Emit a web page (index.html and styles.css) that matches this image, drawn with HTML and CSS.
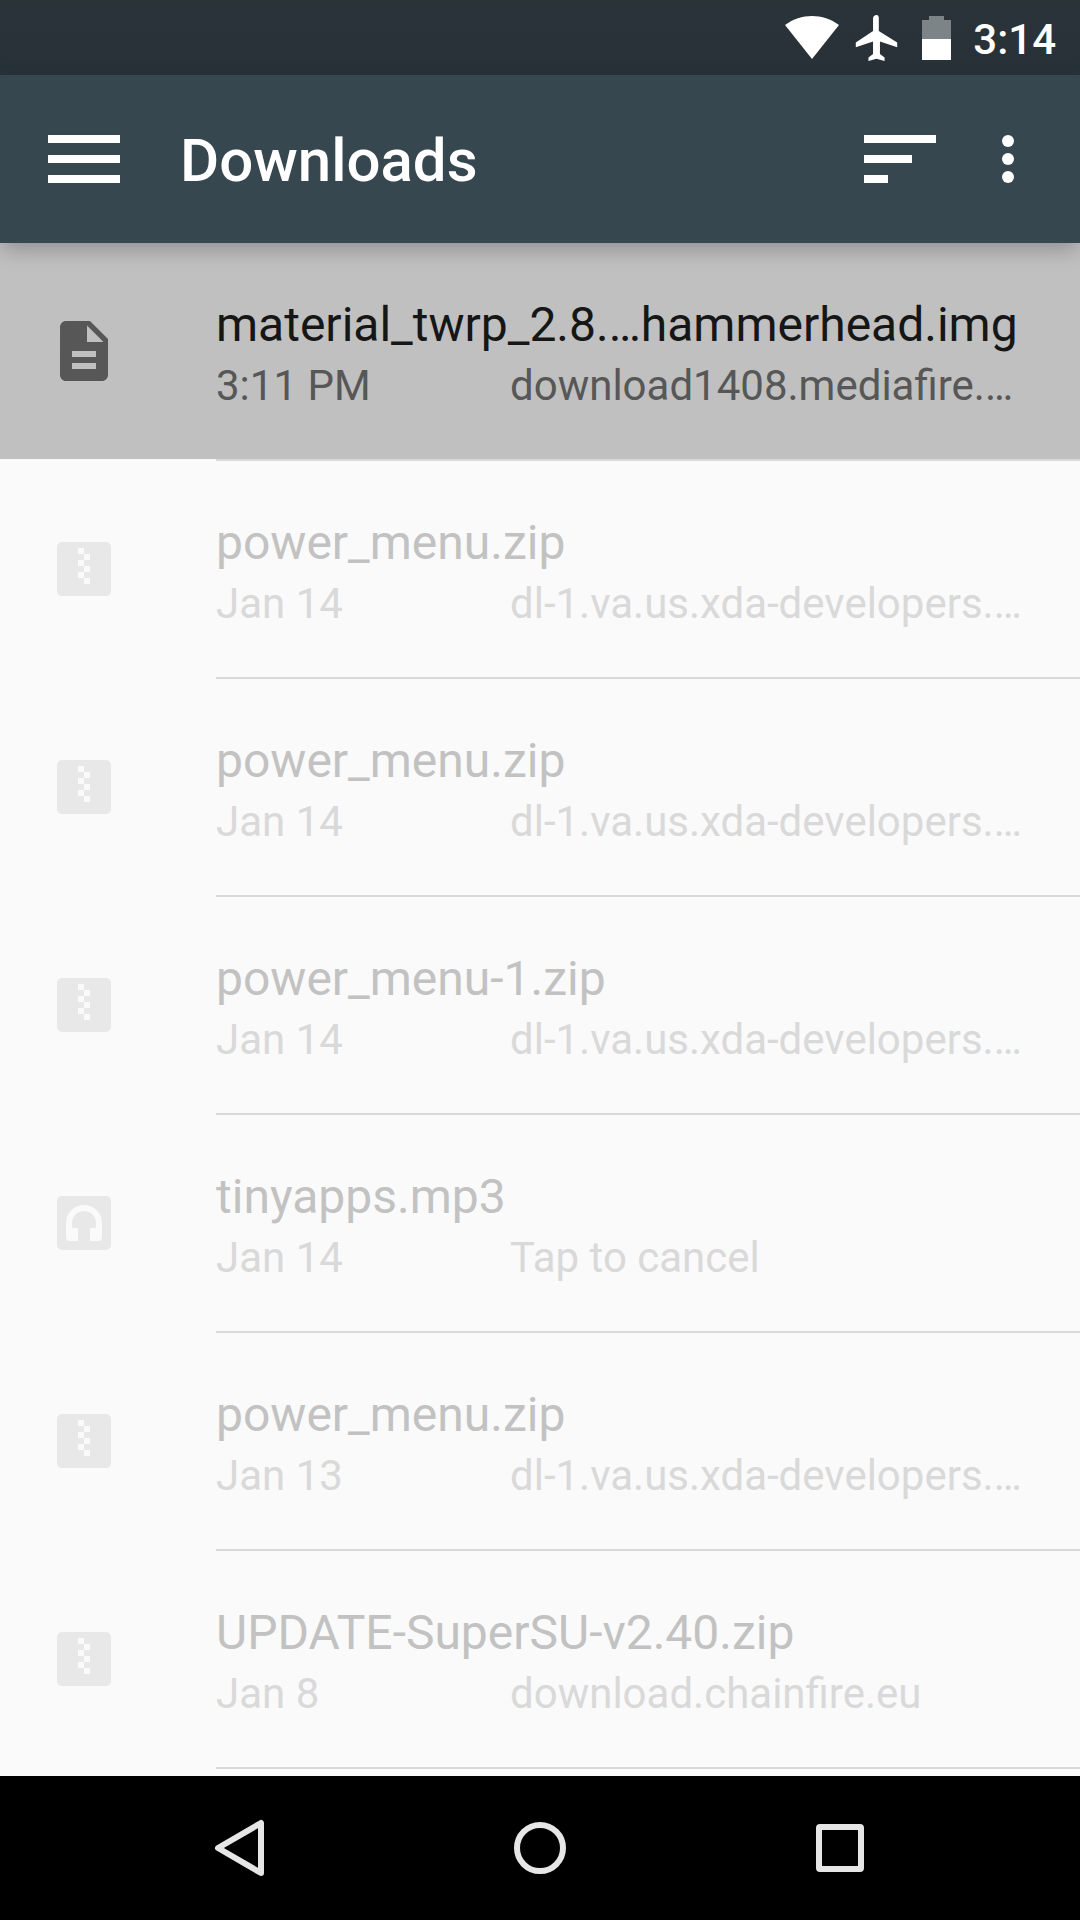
FILE: index.html
```html
<!DOCTYPE html>
<html lang="en">
<head>
<meta charset="utf-8">
<meta name="viewport" content="width=device-width, initial-scale=1">
<title>Downloads</title>
<link rel="stylesheet" href="styles.css">
</head>
<body>
<svg class="sprite" aria-hidden="true">
  <symbol id="doc" viewBox="0 0 24 24"><path d="M14 2H6C4.900 2 4.010 2.900 4.010 4L4 20c0 1.100.890 2 1.990 2H18c1.100 0 2-.900 2-2V8l-6-6zm2 16H8v-2h8v2zm0-4H8v-2h8v2zm-3-5V3.500L18.500 9H13z"/></symbol>
  <symbol id="zip" viewBox="0 0 72 72"><rect x="9" y="9" width="54" height="54" rx="5"/><path fill="#fafafa" d="M30 15h6v6h-6zM36 21h6v6h-6zM30 27h6v6h-6zM36 33h6v6h-6zM30 39h6v6h-6zM36 45h6v6h-6z"/></symbol>
  <symbol id="audio" viewBox="0 0 72 72"><rect x="9" y="9" width="54" height="54" rx="5"/><path fill="#fafafa" d="M18 36a18 18 0 0 1 36 0v14a4 4 0 0 1-4 4h-8V41h6v-5a12 12 0 0 0-24 0v5h6v13h-8a4 4 0 0 1-4-4z"/></symbol>
</svg>

<div class="status-bar">
  <svg class="wifi" viewBox="0 0 54 44" role="img" aria-label="Wi-Fi"><path d="M0 9C16-3 38-3 54 9L27 43z"/></svg>
  <svg class="plane" viewBox="3 2 18 20" role="img" aria-label="Airplane mode"><path d="M21 16v-2l-8-5V3.500C13 2.670 12.830 2 12 2s-1.500.670-1.500 1.500V9L3 14v2l7.500-2.500V19L8.500 20.500V22l3.500-1 3.500 1v-1.500L13.500 19v-5.500L21 16z"/></svg>
  <svg class="battery" viewBox="0 0 29 44" role="img" aria-label="Battery"><path fill="#7d8487" d="M7 0h15v4h7v19H0V4h7z"/><path d="M0 23h29v21H0z"/></svg>
  <time class="clock">3:14</time>
</div>

<header class="app-bar">
  <button class="icon-button" aria-label="Menu"><svg class="bars" viewBox="0 0 72 48"><path d="M0 0h72v8H0zM0 20h72v8H0zM0 40h72v8H0z"/></svg></button>
  <h1 class="title">Downloads</h1>
  <button class="icon-button" aria-label="Sort"><svg class="bars" viewBox="0 0 72 48"><path d="M0 0h72v8H0zM0 20h48v8H0zM0 40h24v8H0z"/></svg></button>
  <button class="icon-button more" aria-label="More options"><svg class="dots" viewBox="0 0 12 48"><circle cx="6" cy="6" r="6"/><circle cx="6" cy="24" r="6"/><circle cx="6" cy="42" r="6"/></svg></button>
</header>

<main class="content">
  <ul class="files">
    <li class="item"><button class="file pressed"><svg class="file-icon"><use href="#doc"/></svg><span class="text"><span class="name">material_twrp_2.8.…hammerhead.img</span><span class="date">3:11 PM</span><span class="source">download1408.mediafire.…</span></span></button></li>
    <li class="item"><button class="file" disabled><svg class="file-icon"><use href="#zip"/></svg><span class="text"><span class="name">power_menu.zip</span><span class="date">Jan 14</span><span class="source">dl-1.va.us.xda-developers.…</span></span></button></li>
    <li class="item"><button class="file" disabled><svg class="file-icon"><use href="#zip"/></svg><span class="text"><span class="name">power_menu.zip</span><span class="date">Jan 14</span><span class="source">dl-1.va.us.xda-developers.…</span></span></button></li>
    <li class="item"><button class="file" disabled><svg class="file-icon"><use href="#zip"/></svg><span class="text"><span class="name">power_menu-1.zip</span><span class="date">Jan 14</span><span class="source">dl-1.va.us.xda-developers.…</span></span></button></li>
    <li class="item"><button class="file" disabled><svg class="file-icon"><use href="#audio"/></svg><span class="text"><span class="name">tinyapps.mp3</span><span class="date">Jan 14</span><span class="source">Tap to cancel</span></span></button></li>
    <li class="item"><button class="file" disabled><svg class="file-icon"><use href="#zip"/></svg><span class="text"><span class="name">power_menu.zip</span><span class="date">Jan 13</span><span class="source">dl-1.va.us.xda-developers.…</span></span></button></li>
    <li class="item"><button class="file" disabled><svg class="file-icon"><use href="#zip"/></svg><span class="text"><span class="name">UPDATE-SuperSU-v2.40.zip</span><span class="date">Jan 8</span><span class="source">download.chainfire.eu</span></span></button></li>
  </ul>
</main>

<nav class="nav-bar" aria-label="System">
  <button class="nav-button" aria-label="Back"><svg class="nav-icon" viewBox="0 0 60 60"><path d="M51 5v50L8 30z"/></svg></button>
  <button class="nav-button" aria-label="Home"><svg class="nav-icon" viewBox="0 0 60 60"><circle cx="30" cy="30" r="23"/></svg></button>
  <button class="nav-button" aria-label="Recent apps"><svg class="nav-icon" viewBox="0 0 60 60"><rect x="9" y="9" width="42" height="42" rx="1"/></svg></button>
</nav>
</body>
</html>
```
FILE: styles.css
```css
* {
  box-sizing: border-box;
}

body {
  display: flex;
  flex-direction: column;
  min-height: 100vh;
  margin: 0;
  background: #fafafa;
  font-family: Roboto, sans-serif;
}

button {
  margin: 0;
  padding: 0;
  border: 0;
  background: none;
  color: inherit;
  font: inherit;
}

svg {
  display: block;
  flex: none;
}

.sprite {
  position: absolute;
  width: 0;
  height: 0;
}

.status-bar {
  display: flex;
  align-items: center;
  justify-content: flex-end;
  height: 75px;
  padding-right: 24px;
  background: linear-gradient(#2a3338, #273138);
  color: #fff;
  fill: #fff;
}

.wifi {
  width: 54px;
  height: 44px;
}

.plane {
  width: 43px;
  height: 46px;
  margin-left: 16px;
}

.battery {
  width: 29px;
  height: 44px;
  margin: 0 22px 0 24px;
}

.clock {
  font-size: 42px;
  font-weight: 500;
  line-height: 48px;
  padding-top: 4px;
}

.app-bar {
  position: relative;
  display: flex;
  align-items: center;
  height: 168px;
  padding: 0 24px;
  background: #37474f;
  color: #fff;
  fill: #fff;
  box-shadow: 0 8px 20px -2px rgba(0, 0, 0, 0.26);
}

.icon-button {
  display: flex;
  align-items: center;
  justify-content: center;
  width: 120px;
  height: 120px;
}

.more {
  width: 96px;
}

.bars {
  width: 72px;
  height: 48px;
}

.dots {
  width: 12px;
  height: 48px;
}

.title {
  flex: 1;
  margin: 0;
  padding: 4px 0 0 36px;
  font-size: 60px;
  font-weight: 500;
  line-height: 72px;
}

.content {
  flex: 1;
}

.files {
  margin: 0;
  padding: 0;
  list-style: none;
}

.item::after {
  content: "";
  display: block;
  height: 2px;
  margin-left: 216px;
  background: #d9d9d9;
}

.file {
  display: flex;
  align-items: center;
  width: 100%;
  height: 216px;
  padding: 0 48px;
  color: #c2c2c2;
  fill: #e8e8e8;
  text-align: left;
  white-space: nowrap;
}

.file-icon {
  width: 72px;
  height: 72px;
  margin-right: 96px;
}

.text {
  display: grid;
  flex: 1;
  grid-template-columns: 294px 1fr;
  padding-top: 8px;
}

.name {
  grid-column: 1 / -1;
  font-size: 48px;
  line-height: 62px;
}

.date,
.source {
  color: #d9d9d9;
  font-size: 42px;
  line-height: 60px;
}

.pressed {
  background: #c0c0c0;
  color: #161616;
  fill: #575757;
}

.pressed .date,
.pressed .source {
  color: #575757;
}

.nav-bar {
  display: flex;
  height: 144px;
  padding: 0 90px;
  background: #000;
}

.nav-button {
  display: flex;
  flex: 1;
  align-items: center;
  justify-content: center;
}

.nav-icon {
  width: 60px;
  height: 60px;
  fill: none;
  stroke: #e6e6e6;
  stroke-width: 6px;
  stroke-linejoin: round;
}
```
